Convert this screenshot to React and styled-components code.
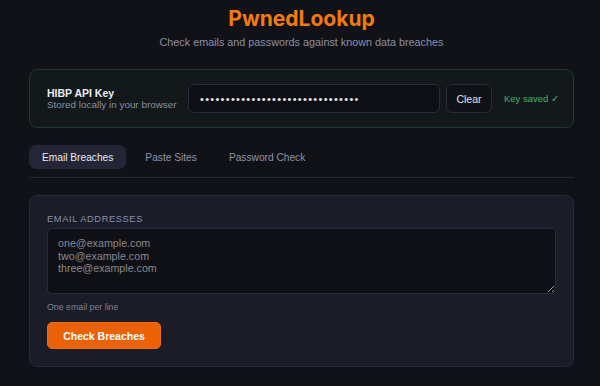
import React, { useState } from "react";
import styled, { createGlobalStyle } from "styled-components";

const Global = createGlobalStyle`
    html, body {
        margin: 0;
        background: #111217;
    }
    body {
        font-family: "Liberation Sans", Arial, sans-serif;
        color: #e6e7ee;
    }
    * { box-sizing: border-box; }
`

const Page = styled.div`
    padding: 6px 26px 20px 29px;
    display: flex;
    flex-direction: column;
`

const Header = styled.header`
    display: flex;
    flex-direction: column;
    align-items: center;
    margin-bottom: 21px;
`

const Title = styled.h1`
    margin: 0;
    font-family: Inter, "Liberation Sans", sans-serif;
    font-size: 21px;
    line-height: 26px;
    font-weight: 700;
    color: #f47a0c;
`

const Subtitle = styled.p`
    margin: 4px 0 0;
    font-size: 10.8px;
    color: #8b8fa6;
`

const KeyCard = styled.section`
    display: flex;
    align-items: center;
    gap: 6px;
    height: 59px;
    padding: 0 10px 0 17px;
    background: #13191a;
    border: 1px solid #1f3a2a;
    border-radius: 8px;
`

const KeyInfo = styled.div`
    display: flex;
    flex-direction: column;
    flex: 0 0 135px;
`

const KeyTitle = styled.span`
    font-size: 10.5px;
    font-weight: 700;
    color: #eceef5;
    line-height: 12px;
`

const KeyHint = styled.span`
    font-size: 9.9px;
    color: #8a8ea2;
    line-height: 12px;
    white-space: nowrap;
`

const KeyInput = styled.input`
    flex: 0 0 252px;
    height: 29px;
    padding: 0 11px;
    background: #0e0f14;
    border: 1px solid #282b3c;
    border-radius: 6px;
    color: #e8e8ee;
    font-family: inherit;
    font-size: 11px;
    letter-spacing: 1.3px;
    outline: none;
`

const ClearButton = styled.button`
    flex: 0 0 46px;
    height: 29px;
    background: #0f1216;
    border: 1px solid #282b3c;
    border-radius: 6px;
    color: #e2e3ea;
    font-family: inherit;
    font-size: 10.5px;
    cursor: pointer;
`

const Saved = styled.span`
    margin-left: 6px;
    font-size: 9.5px;
    color: #3fb765;
    white-space: nowrap;
`

const Tabs = styled.nav`
    display: flex;
    margin-top: 17px;
    padding-bottom: 8px;
    border-bottom: 1px solid #232538;
`

const Tab = styled.button`
    height: 24px;
    padding: 0 13px;
    margin-right: 6px;
    background: ${({ $active }) => ($active ? "#242637" : "transparent")};
    border: none;
    border-radius: 7px;
    color: ${({ $active }) => ($active ? "#e8e9f0" : "#8e92a8")};
    font-family: inherit;
    font-size: 10.2px;
    cursor: pointer;
`

const Panel = styled.section`
    margin-top: 17px;
    padding: 18px 17px 16px;
    height: 172px;
    background: #1a1d28;
    border: 1px solid #262a3b;
    border-radius: 8px;
    display: flex;
    flex-direction: column;
`

const Label = styled.label`
    font-size: 9.3px;
    letter-spacing: 0.6px;
    text-transform: uppercase;
    color: #8a90ad;
    margin-bottom: 4px;
`

const Emails = styled.textarea`
    height: 66px;
    padding: 8px 10px 7px;
    background: #0f1015;
    border: 1px solid #282b3c;
    border-radius: 5px;
    color: #dcdce2;
    font-family: inherit;
    font-size: 10.7px;
    line-height: 12.5px;
    resize: vertical;
    outline: none;

    &::placeholder {
        color: #88888f;
    }
`

const Help = styled.span`
    margin-top: 8px;
    font-size: 8.8px;
    color: #7d8196;
`

const CheckButton = styled.button`
    align-self: flex-start;
    margin-top: 10px;
    width: 114px;
    height: 27px;
    background: #ea6106;
    border: 1px solid #f06a10;
    border-radius: 5px;
    color: #fff;
    font-family: inherit;
    font-weight: 700;
    font-size: 10.5px;
    cursor: pointer;
`

const tabs = ["Email Breaches", "Paste Sites", "Password Check"];

export default function App() {
    const [active, setActive] = useState(0);
    const [key, setKey] = useState("hibp-0123456789abcdef0123456789");

    return (
        <>
            <Global />
            <Page>
                <Header>
                    <Title>PwnedLookup</Title>
                    <Subtitle>Check emails and passwords against known data breaches</Subtitle>
                </Header>

                <KeyCard>
                    <KeyInfo>
                        <KeyTitle>HIBP API Key</KeyTitle>
                        <KeyHint>Stored locally in your browser</KeyHint>
                    </KeyInfo>
                    <KeyInput type="password" value={key} onChange={(e) => setKey(e.target.value)} />
                    <ClearButton onClick={() => setKey("")}>Clear</ClearButton>
                    <Saved>Key saved ✓</Saved>
                </KeyCard>

                <Tabs>
                    {tabs.map((t, i) => (
                        <Tab key={t} $active={i === active} onClick={() => setActive(i)}>
                            {t}
                        </Tab>
                    ))}
                </Tabs>

                <Panel>
                    <Label>Email Addresses</Label>
                    <Emails placeholder={"one@example.com\ntwo@example.com\nthree@example.com"} />
                    <Help>One email per line</Help>
                    <CheckButton>Check Breaches</CheckButton>
                </Panel>
            </Page>
        </>
    );
}
